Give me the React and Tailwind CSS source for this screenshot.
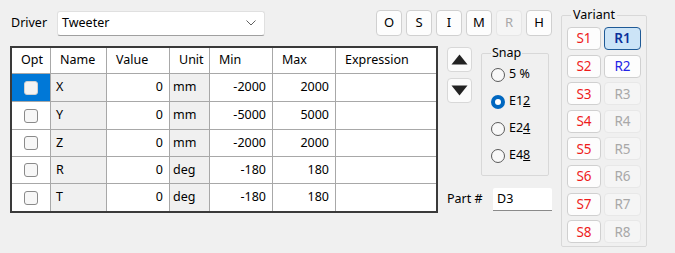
import React from "react";

const COLS = [
  { key: "opt", label: "Opt", w: "w-[39px]" },
  { key: "name", label: "Name", w: "w-[56px]" },
  { key: "value", label: "Value", w: "w-[63px]" },
  { key: "unit", label: "Unit", w: "w-[40px]" },
  { key: "min", label: "Min", w: "w-[63px]" },
  { key: "max", label: "Max", w: "w-[63px]" },
  { key: "expr", label: "Expression", w: "w-[98px]" },
];

const ROWS = [
  { name: "X", value: 0, unit: "mm", min: -2000, max: 2000, h: "h-[28px]", selected: true },
  { name: "Y", value: 0, unit: "mm", min: -5000, max: 5000, h: "h-[28px]" },
  { name: "Z", value: 0, unit: "mm", min: -2000, max: 2000, h: "h-[27px]" },
  { name: "R", value: 0, unit: "deg", min: -180, max: 180, h: "h-[27px]" },
  { name: "T", value: 0, unit: "deg", min: -180, max: 180, h: "h-[27px]", last: true },
];

function Checkbox({ selected }) {
  return (
    <div
      className={
        "w-[14px] h-[14px] rounded-[3px] border " +
        (selected ? "bg-[#f3f3f3] border-[#d0d0d0]" : "bg-[#f7f7f7] border-[#8a8a8a]")
      }
    />
  );
}

function ParamTable() {
  return (
    <div className="w-[428px] h-[167px] border-2 border-[#3a3a3a] bg-white flex flex-col">
      {/* header */}
      <div className="flex h-[26px] border-b border-[#a8a8a8]">
        {COLS.map((c, i) => (
          <div
            key={c.key}
            className={
              c.w + " flex items-center pl-[9px] " + (i < COLS.length - 1 ? "border-r border-[#a8a8a8]" : "")
            }
          >
            {c.label}
          </div>
        ))}
      </div>
      {ROWS.map((r) => (
        <div key={r.name} className={"flex " + r.h + (r.last ? "" : " border-b border-[#a8a8a8]")}>
          <div
            className={
              "w-[39px] flex items-center justify-center border-r border-[#a8a8a8] " +
              (r.selected ? "bg-[#0078d7]" : "bg-white")
            }
          >
            <Checkbox selected={r.selected} />
          </div>
          <div className="w-[56px] flex items-center pl-[5px] bg-[#f0f0f0] border-r border-[#a8a8a8]">{r.name}</div>
          <div className="w-[63px] flex items-center justify-end pr-[6px] border-r border-[#a8a8a8]">{r.value}</div>
          <div className="w-[40px] flex items-center pl-[3px] bg-[#f0f0f0] border-r border-[#a8a8a8]">{r.unit}</div>
          <div className="w-[63px] flex items-center justify-end pr-[6px] border-r border-[#a8a8a8]">{r.min}</div>
          <div className="w-[63px] flex items-center justify-end pr-[6px] border-r border-[#a8a8a8]">{r.max}</div>
          <div className="w-[98px]" />
        </div>
      ))}
    </div>
  );
}

function Radio({ checked, children }) {
  return (
    <div className="flex items-center h-[27px]">
      {checked ? (
        <div className="w-[14px] h-[14px] rounded-full bg-[#0067c0] flex items-center justify-center">
          <div className="w-[6px] h-[6px] rounded-full bg-white" />
        </div>
      ) : (
        <div className="w-[14px] h-[14px] rounded-full border border-[#5a5a5a] bg-[#f8f8f8]" />
      )}
      <span className="ml-[4px]">{children}</span>
    </div>
  );
}

function ToolButton({ label, disabled }) {
  return (
    <div
      className={
        "w-[26px] h-[26px] rounded-[4px] border flex items-center justify-center text-[13px] " +
        (disabled ? "bg-[#f5f5f5] border-[#e6e6e6] text-[#a8a8a8]" : "bg-[#fdfdfd] border-[#d0d0d0] text-black")
      }
    >
      {label}
    </div>
  );
}

function VariantButton({ label, kind }) {
  const styles = {
    s: "w-[34px] bg-[#fdfdfd] border border-[#d0d0d0] text-[#ee1c1c]",
    r1: "w-[37px] bg-[#cce4f7] border-[1.5px] border-[#1f5a96] text-[#0a2f9a] font-semibold",
    r: "w-[37px] bg-[#fdfdfd] border border-[#d0d0d0] text-[#2424e6]",
    off: "w-[37px] bg-[#f5f5f5] border border-[#e8e8e8] text-[#a8a8a8]",
  };
  return (
    <div className={"h-[23px] rounded-[4px] flex items-center justify-center text-[13.5px] " + styles[kind]}>
      {label}
    </div>
  );
}

export default function App() {
  const variants = [1, 2, 3, 4, 5, 6, 7, 8];

  return (
    <div className="w-[675px] h-[253px] bg-[#f0f0f0] flex font-['Noto_Sans',sans-serif] text-[12.5px] text-black overflow-hidden">
      <div className="ml-[10px] w-[542px] flex flex-col">
        {/* Driver row */}
        <div className="mt-[10px] h-[26px] flex items-center">
          <span className="ml-[1px] w-[46px]">Driver</span>
          <div className="w-[208px] h-[25px] bg-white border border-[#e0e0e0] border-b-[#a0a0a0] rounded-[3px] flex items-center pl-[4px] pr-[8px]">
            <span className="flex-1">Tweeter</span>
            <svg width="10" height="6" viewBox="0 0 10 6">
              <path d="M0.5 0.5 L5 5 L9.5 0.5" fill="none" stroke="#606060" strokeWidth="1" />
            </svg>
          </div>
          <div className="ml-auto flex gap-[4px]">
            <ToolButton label="O" />
            <ToolButton label="S" />
            <ToolButton label="I" />
            <ToolButton label="M" />
            <ToolButton label="R" disabled />
            <ToolButton label="H" />
          </div>
        </div>

        {/* Table + side controls */}
        <div className="mt-[10px] flex">
          <ParamTable />
          <div className="ml-[9px] flex flex-col">
            <div className="flex">
              <div className="mt-[1px] flex flex-col gap-[6px]">
                <div className="w-[25px] h-[25px] rounded-[4px] border border-[#d8d8d8] bg-[#fbfbfb] flex items-center justify-center">
                  <svg width="17" height="11" viewBox="0 0 17 11">
                    <path d="M8.5 0.5 L16.5 10.5 L0.5 10.5 Z" fill="#222" />
                  </svg>
                </div>
                <div className="w-[25px] h-[25px] rounded-[4px] border border-[#d8d8d8] bg-[#fbfbfb] flex items-center justify-center">
                  <svg width="17" height="11" viewBox="0 0 17 11">
                    <path d="M0.5 0.5 L16.5 0.5 L8.5 10.5 Z" fill="#222" />
                  </svg>
                </div>
              </div>
              <fieldset className="ml-[9px] w-[68px] h-[130px] border border-[#d8d8d8] rounded-[2px] pl-[9px]">
                <legend className="px-[1px] leading-[14px]">Snap</legend>
                <div className="mt-[1px] flex flex-col">
                  <Radio>5 %</Radio>
                  <Radio checked>
                    E1<span className="underline">2</span>
                  </Radio>
                  <Radio>
                    E2<span className="underline">4</span>
                  </Radio>
                  <Radio>
                    E4<span className="underline">8</span>
                  </Radio>
                </div>
              </fieldset>
            </div>
            <div className="mt-[12px] flex items-center">
              <span className="w-[46px]">Part #</span>
              <div className="w-[59px] h-[23px] bg-white border-b border-[#8a8a8a] rounded-t-[2px] flex items-center pl-[4px]">
                D3
              </div>
            </div>
          </div>
        </div>
      </div>

      {/* Variant group */}
      <fieldset className="ml-[9px] mt-[8px] w-[86px] h-[239px] border border-[#d8d8d8] rounded-[2px] px-[5px]">
        <legend className="ml-[4px] px-[2px] leading-[14px]">Variant</legend>
        <div className="mt-[5px] flex flex-col gap-[4.6px]">
          {variants.map((n) => (
            <div key={n} className="flex gap-[3px]">
              <VariantButton label={"S" + n} kind="s" />
              <VariantButton label={"R" + n} kind={n === 1 ? "r1" : n === 2 ? "r" : "off"} />
            </div>
          ))}
        </div>
      </fieldset>
    </div>
  );
}
